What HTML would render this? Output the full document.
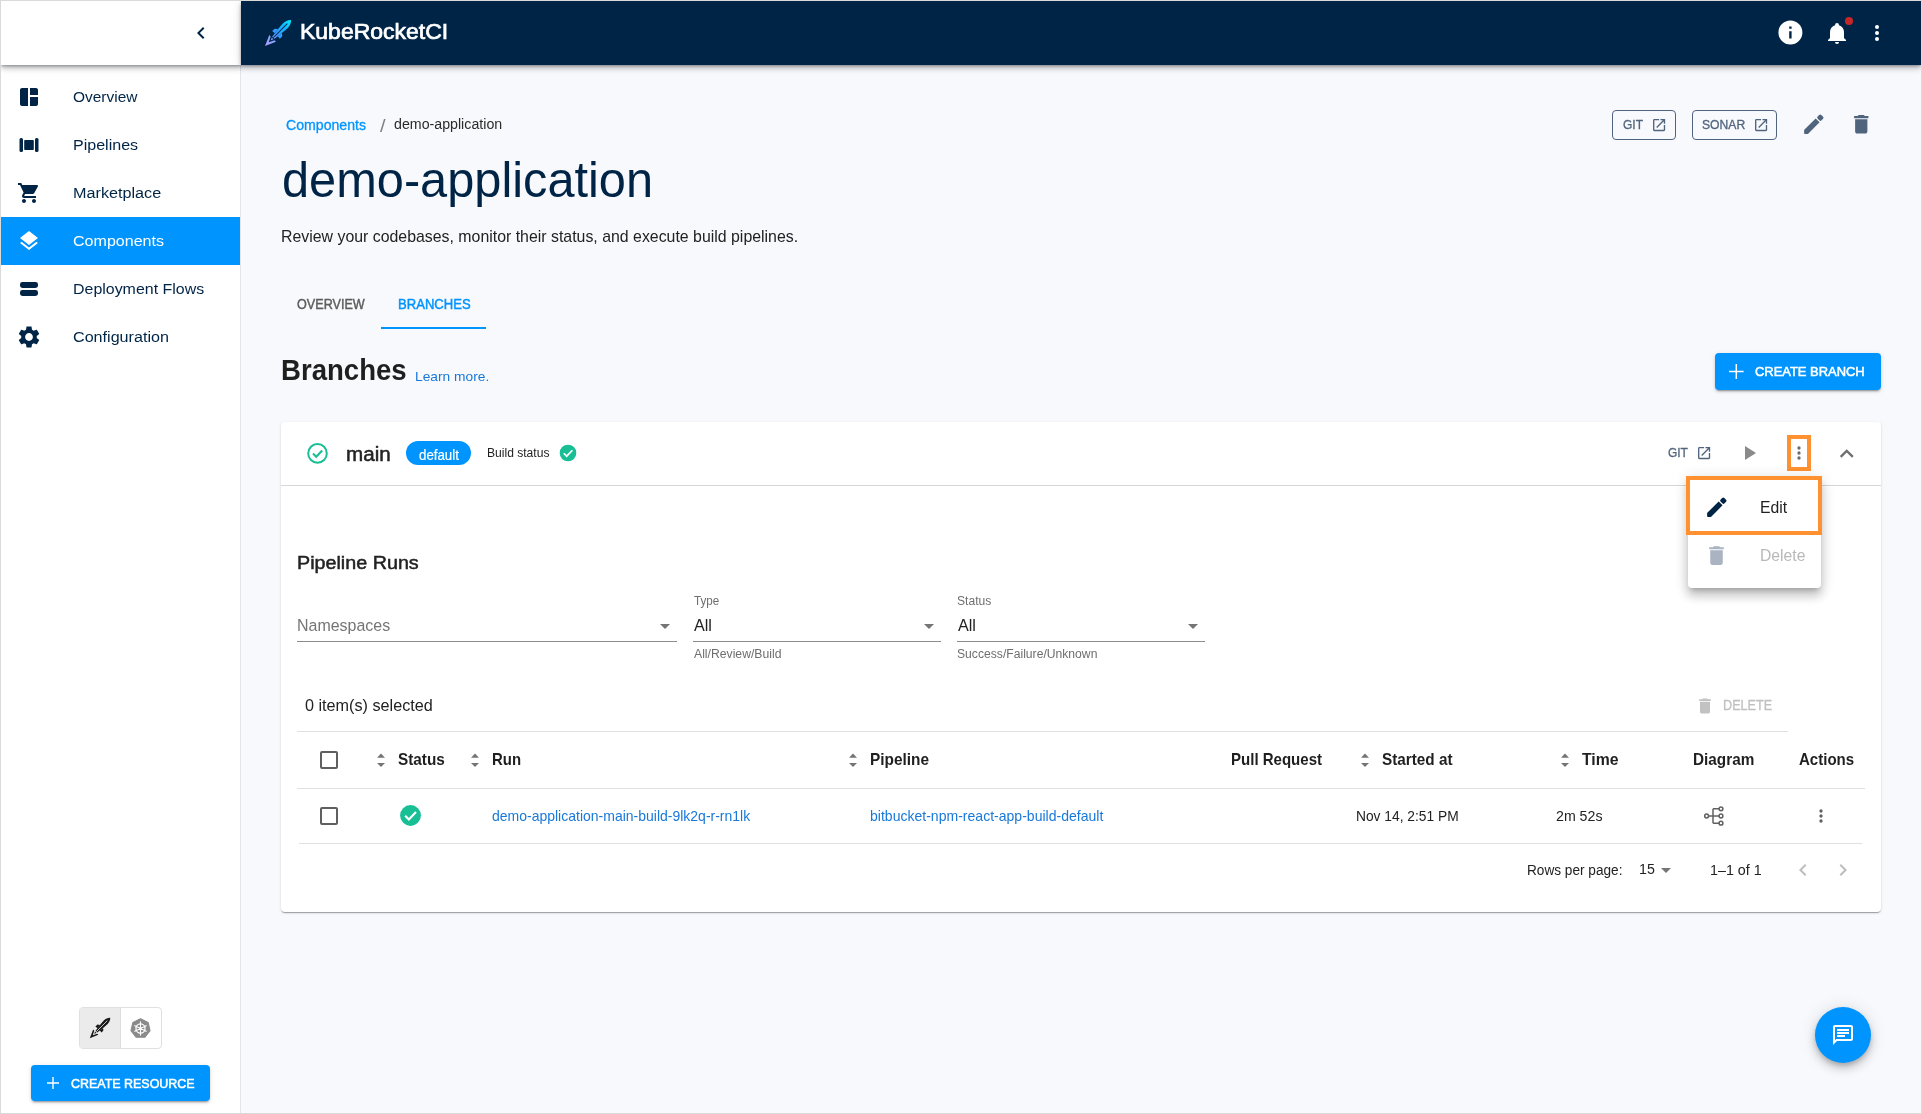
<!DOCTYPE html>
<html>
<head>
<meta charset="utf-8">
<title>KubeRocketCI</title>
<style>
*{box-sizing:border-box;margin:0;padding:0}
html,body{width:1922px;height:1114px;overflow:hidden;background:#dadada;font-family:"Liberation Sans",sans-serif;}
#app{position:absolute;left:1px;top:1px;width:1920px;height:1112px;background:#f8f9fd;overflow:hidden}
.a{position:absolute}
.t{position:absolute;white-space:nowrap;line-height:1;transform-origin:0 0;font-family:"Liberation Sans",sans-serif}
svg{position:absolute;overflow:visible}
/* sidebar */
#side{position:absolute;left:0;top:0;width:240px;height:1112px;background:#fff;border-right:1px solid #e3e5ea}
#sidetop{position:absolute;left:0;top:0;width:240px;height:64px;background:#fff;box-shadow:0 1px 2px 0 rgba(0,25,65,.2),0 2px 4px -1px rgba(0,0,0,.2),0 4px 5px 0 rgba(0,0,0,.14),0 1px 10px 0 rgba(0,0,0,.12)}
#navact{position:absolute;left:0;top:216px;width:239px;height:48px;background:#0094ff}
/* topbar */
#top{position:absolute;left:240px;top:0;width:1680px;height:64px;background:#002446;box-shadow:0 1px 2px 0 rgba(0,25,65,.2),0 2px 4px -1px rgba(0,0,0,.2),0 4px 5px 0 rgba(0,0,0,.14),0 1px 10px 0 rgba(0,0,0,.12)}
.btn-out{position:absolute;height:30px;border:1px solid #50647e;border-radius:4px}
.bluebtn{position:absolute;background:#0094ff;border-radius:4px;box-shadow:0 3px 1px -2px rgba(0,0,0,.2),0 2px 2px 0 rgba(0,0,0,.14),0 1px 5px 0 rgba(0,0,0,.12)}
#card{position:absolute;left:280px;top:421px;width:1600px;height:490px;background:#fff;border-radius:4px;box-shadow:0 2px 1px -1px rgba(0,0,0,.2),0 1px 1px 0 rgba(0,0,0,.14),0 1px 3px 0 rgba(0,0,0,.12)}
.hl{position:absolute;height:1px;background:#e0e0e0}
.ul{position:absolute;height:1px;background:#8c8c8c}
.cb{position:absolute;width:18px;height:18px;border:2px solid #5f5f5f;border-radius:2px}
.tri-d{position:absolute;width:0;height:0;border-left:5px solid transparent;border-right:5px solid transparent;border-top:5px solid #757575}
</style>
</head>
<body>
<div id="app">

<!-- ============ MAIN CONTENT ============ -->
<div id="main">
<!-- GIT / SONAR buttons -->
<div class="btn-out" style="left:1611px;top:109px;width:64px"></div>
<svg style="left:1649.800px;top:116.400px" width="16.200" height="16.200" viewBox="0 0 24 24" fill="#50647e"><path d="M19 19H5V5h7V3H5c-1.110 0-2 .9-2 2v14c0 1.100.89 2 2 2h14c1.100 0 2-.9 2-2v-7h-2v7zM14 3v2h3.590l-9.830 9.830 1.410 1.410L19 6.410V10h2V3h-7z"/></svg>
<div class="btn-out" style="left:1691px;top:109px;width:85px"></div>
<svg style="left:1751.800px;top:116.400px" width="16.200" height="16.200" viewBox="0 0 24 24" fill="#50647e"><path d="M19 19H5V5h7V3H5c-1.110 0-2 .9-2 2v14c0 1.100.89 2 2 2h14c1.100 0 2-.9 2-2v-7h-2v7zM14 3v2h3.590l-9.830 9.830 1.410 1.410L19 6.410V10h2V3h-7z"/></svg>
<!-- pencil -->
<svg style="left:1799.900px;top:110.800px" width="25" height="25" viewBox="0 0 24 24" fill="#50647e"><path d="M3 17.460v3.040c0 .28.22.5.5.5h3.040c.13 0 .26-.05.35-.15L17.810 9.940l-3.750-3.750L3.150 17.100c-.1.1-.15.22-.15.36z"/><rect x="9.350" y="0.200" width="5.300" height="5" rx="1.500" transform="rotate(45 12 12)"/></svg>
<!-- trash -->
<svg style="left:1847.500px;top:111.300px" width="24.500" height="24.500" viewBox="0 0 24 24" fill="#50647e"><path d="M6 19c0 1.100.9 2 2 2h8c1.100 0 2-.9 2-2V7H6v12zM19 4h-3.500l-1-1h-5l-1 1H5v2h14V4z"/></svg>
<!-- tab underline -->
<div class="a" style="left:380px;top:326px;width:105px;height:2px;background:#0094ff"></div>
<!-- create branch -->
<div class="bluebtn" style="left:1714px;top:352px;width:166px;height:37px"></div>
<svg style="left:1728.300px;top:362.500px" width="14.600" height="15" viewBox="0 0 14.600 15"><path d="M7.300 0V15M0 7.500H14.600" stroke="#fff" stroke-width="1.500" fill="none"/></svg>
<!-- card -->
<div id="card"></div>
<div class="hl" style="left:280px;top:484px;width:1600px;background:#d6d6d6"></div>
<!-- outline check -->
<svg style="left:306px;top:442px" width="21" height="21" viewBox="0 0 21 21" fill="none" stroke="#18be94"><circle cx="10.500" cy="10.400" r="9.300" stroke-width="2"/><path d="M6 10.600L9.200 13.800L15.200 7.600" stroke-width="2.100"/></svg>
<!-- chip -->
<div class="a" style="left:405px;top:440px;width:65px;height:24px;border-radius:12px;background:#0094ff"></div>
<!-- filled check small -->
<svg style="left:557px;top:442.100px" width="20" height="20" viewBox="0 0 24 24" fill="#18be94"><circle cx="12" cy="12" r="10"/><path d="M6.900 12.300L10.400 15.800L17.300 8.700" fill="none" stroke="#fff" stroke-width="2.100"/></svg>
<!-- card header right -->
<svg style="left:1694.700px;top:444px" width="16.200" height="16.200" viewBox="0 0 24 24" fill="#50647e"><path d="M19 19H5V5h7V3H5c-1.110 0-2 .9-2 2v14c0 1.100.89 2 2 2h14c1.100 0 2-.9 2-2v-7h-2v7zM14 3v2h3.590l-9.830 9.830 1.410 1.410L19 6.410V10h2V3h-7z"/></svg>
<svg style="left:1735.900px;top:440.200px" width="24" height="24" viewBox="0 0 24 24" fill="#8a8a8a"><path d="M8 5v14l11-7z"/></svg>
<svg style="left:1788px;top:442.200px" width="20" height="20" viewBox="0 0 24 24" fill="#6c6c6c"><circle cx="12" cy="6" r="2"/><circle cx="12" cy="12" r="2"/><circle cx="12" cy="18" r="2"/></svg>
<svg style="left:1832.200px;top:438.800px" width="27.500" height="27.500" viewBox="0 0 24 24" fill="#6e6e6e"><path d="M12 8l-6 6 1.410 1.410L12 10.830l4.590 4.580L18 14z"/></svg>
<!-- filters -->
<div class="ul" style="left:296px;top:640px;width:380px"></div>
<div class="tri-d" style="left:658.600px;top:622.700px"></div>
<div class="ul" style="left:692px;top:640px;width:248px"></div>
<div class="tri-d" style="left:923px;top:622.700px"></div>
<div class="ul" style="left:956px;top:640px;width:248px"></div>
<div class="tri-d" style="left:1187.300px;top:622.700px"></div>
<!-- selected row / delete -->
<svg style="left:1694px;top:695px" width="20" height="20" viewBox="0 0 24 24" fill="#c2c2c2"><path d="M6 19c0 1.100.9 2 2 2h8c1.100 0 2-.9 2-2V7H6v12zM19 4h-3.500l-1-1h-5l-1 1H5v2h14V4z"/></svg>
<div class="hl" style="left:296px;top:730px;width:1491px"></div>
<!-- table header -->
<div class="cb" style="left:319px;top:750px"></div>
<svg style="left:375.8px;top:752px" width="8" height="14" viewBox="0 0 8 14" fill="#757575"><path d="M0 4.800L4 0.500L8 4.800Z M0 10L4 14L8 10Z"/></svg>
<svg style="left:469.8px;top:752px" width="8" height="14" viewBox="0 0 8 14" fill="#757575"><path d="M0 4.800L4 0.500L8 4.800Z M0 10L4 14L8 10Z"/></svg>
<svg style="left:847.8px;top:752px" width="8" height="14" viewBox="0 0 8 14" fill="#757575"><path d="M0 4.800L4 0.500L8 4.800Z M0 10L4 14L8 10Z"/></svg>
<svg style="left:1359.7px;top:752px" width="8" height="14" viewBox="0 0 8 14" fill="#757575"><path d="M0 4.800L4 0.500L8 4.800Z M0 10L4 14L8 10Z"/></svg>
<svg style="left:1559.8px;top:752px" width="8" height="14" viewBox="0 0 8 14" fill="#757575"><path d="M0 4.800L4 0.500L8 4.800Z M0 10L4 14L8 10Z"/></svg>

<div class="hl" style="left:296px;top:787px;width:1568px"></div>
<!-- row -->
<div class="cb" style="left:319px;top:806px"></div>
<svg style="left:397px;top:802.100px" width="25" height="25" viewBox="0 0 24 24" fill="#18be94"><circle cx="12" cy="12" r="10"/><path d="M6.900 12.300L10.400 15.800L17.300 8.700" fill="none" stroke="#fff" stroke-width="2.100"/></svg>
<!-- diagram icon -->
<svg style="left:1703.200px;top:805px" width="20" height="20" viewBox="0 0 20 20" fill="none" stroke="#616161" stroke-width="1.500"><circle cx="2.600" cy="10" r="1.900"/><circle cx="17" cy="2.800" r="1.900"/><circle cx="17" cy="10" r="1.900"/><circle cx="17" cy="17.200" r="1.900"/><path d="M4.500 10H15.100M9 2.800H15.100M9 17.200H15.100M9 2.800V17.200"/></svg>
<svg style="left:1809.800px;top:805px" width="20" height="20" viewBox="0 0 24 24" fill="#616161"><circle cx="12" cy="6" r="2"/><circle cx="12" cy="12" r="2"/><circle cx="12" cy="18" r="2"/></svg>
<div class="hl" style="left:298px;top:842px;width:1563px"></div>
<!-- pagination -->
<div class="tri-d" style="left:1660.100px;top:866.600px"></div>
<svg style="left:1789.600px;top:857px" width="24" height="24" viewBox="0 0 24 24" fill="#bdbdbd"><path d="M15.410 7.410L14 6l-6 6 6 6 1.410-1.410L10.830 12z"/></svg>
<svg style="left:1830.300px;top:857px" width="24" height="24" viewBox="0 0 24 24" fill="#bdbdbd"><path d="M10 6L8.590 7.410 13.170 12l-4.580 4.590L10 18l6-6z"/></svg>
<!-- FAB -->
<div class="a" style="left:1814px;top:1006px;width:56px;height:56px;border-radius:50%;background:#0094ff;box-shadow:0 3px 5px -1px rgba(0,0,0,.2),0 6px 10px 0 rgba(0,0,0,.14),0 1px 18px 0 rgba(0,0,0,.12)"></div>
<svg style="left:1830px;top:1022px" width="24" height="24" viewBox="0 0 24 24" fill="#fff"><path d="M4 4h16v12H5.170L4 17.170V4m0-2c-1.100 0-1.990.9-1.990 2L2 22l4-4h14c1.100 0 2-.9 2-2V4c0-1.100-.9-2-2-2H4zm2 10h8v2H6v-2zm0-3h12v2H6V9zm0-3h12v2H6V6z"/></svg>

</div>

<!-- ============ SIDEBAR ============ -->
<div id="side">
<div id="navact"></div>
<!-- overview -->
<svg style="left:16px;top:84px" width="24" height="24" viewBox="0 0 24 24" fill="#002446"><path d="M11 21H5c-1.1 0-2-.9-2-2V5c0-1.1.9-2 2-2h6v18zm2 0h6c1.1 0 2-.9 2-2v-7h-8v9zm8-11V5c0-1.1-.9-2-2-2h-6v7h8z"/></svg>
<!-- pipelines -->
<svg style="left:16px;top:132px" width="24" height="24" viewBox="0 0 24 24" fill="#002446"><rect x="2.5" y="5" width="3.5" height="14" rx="1.5"/><rect x="7.2" y="7" width="9.6" height="10" rx="0.8"/><rect x="18" y="5" width="3.5" height="14" rx="1.5"/></svg>
<!-- marketplace -->
<svg style="left:16px;top:180px" width="24" height="24" viewBox="0 0 24 24" fill="#002446"><path d="M7 18c-1.1 0-1.99.9-1.99 2S5.900 22 7 22s2-.9 2-2-.9-2-2-2zM1 2v2h2l3.600 7.590-1.350 2.450c-.16.28-.25.61-.25.96 0 1.100.9 2 2 2h12v-2H7.420c-.14 0-.25-.11-.25-.25l.03-.12.9-1.630h7.450c.75 0 1.410-.41 1.750-1.030l3.580-6.490c.08-.14.12-.31.12-.48 0-.55-.45-1-1-1H5.210l-.94-2H1zm16 16c-1.100 0-1.990.9-1.990 2s.89 2 1.990 2 2-.9 2-2-.9-2-2-2z"/></svg>
<!-- components -->
<svg style="left:16px;top:228px" width="24" height="24" viewBox="0 0 24 24" fill="#fff"><path d="M11.99 18.54l-7.370-5.730L3 14.070l9 7 9-7-1.630-1.270-7.380 5.740zM12 16l7.360-5.730L21 9l-9-7-9 7 1.630 1.270L12 16z"/></svg>
<!-- deployment flows -->
<svg style="left:16px;top:276px" width="24" height="24" viewBox="0 0 24 24" fill="#002446"><rect x="3" y="5" width="18" height="6" rx="2.4"/><rect x="3" y="13" width="18" height="6" rx="2.4"/></svg>
<!-- configuration -->
<svg style="left:15px;top:323px" width="26" height="26" viewBox="0 0 24 24" fill="#002446"><path d="M19.140 12.940c.04-.3.06-.61.06-.94 0-.32-.02-.64-.07-.94l2.030-1.580c.18-.14.23-.41.12-.61l-1.920-3.320c-.12-.22-.37-.29-.59-.22l-2.390.96c-.5-.38-1.030-.7-1.620-.94l-.36-2.540c-.04-.24-.24-.41-.48-.41h-3.840c-.24 0-.43.17-.47.41l-.36 2.540c-.59.24-1.130.57-1.620.94l-2.390-.96c-.22-.08-.47 0-.59.22L2.740 8.870c-.12.21-.08.47.12.61l2.030 1.580c-.05.3-.09.63-.09.94s.02.64.07.94l-2.030 1.580c-.18.14-.23.41-.12.61l1.920 3.320c.12.22.37.29.59.22l2.390-.96c.5.38 1.030.7 1.620.94l.36 2.540c.05.24.24.41.48.41h3.840c.24 0 .44-.17.47-.41l.36-2.540c.59-.24 1.130-.56 1.620-.94l2.390.96c.22.08.47 0 .59-.22l1.920-3.320c.12-.22.07-.47-.12-.61l-2.010-1.580zM12 15.600c-1.980 0-3.600-1.620-3.600-3.600s1.620-3.600 3.600-3.600 3.600 1.620 3.600 3.600-1.620 3.600-3.600 3.600z"/></svg>
<!-- toggle group -->
<div class="a" style="left:78px;top:1006px;width:83px;height:42px;border:1px solid #e0e0e0;border-radius:4px;background:#fff;overflow:hidden"><div class="a" style="left:0;top:0;width:41px;height:40px;background:#ebebeb;border-right:1px solid #dcdcdc"></div></div>
<!-- mini rocket dark -->
<svg style="left:88px;top:1016px" width="22" height="22" viewBox="0 0 28 28"><g transform="translate(14,14) rotate(45)" fill="#1a1a1a"><path d="M0 -18.400C2.200 -16.500 3.300 -13.500 3.300 -10.500C3.300 -6 2.200 1 1.500 6.700L-1.500 6.700C-2.200 1 -3.300 -6 -3.300 -10.500C-3.300 -13.500 -2.200 -16.500 0 -18.400Z"/><path d="M0 -13.200L0 6.700" stroke="#ebebeb" stroke-width="1" fill="none"/><path d="M-2.700 -2.800L-5.300 -0.800L-5.500 2.800L-2.100 2.400ZM2.700 -2.800L5.300 -0.800L5.500 2.800L2.100 2.400Z"/><path d="M-4.700 7.600L0 18.400L4.700 7.600L2.700 7.600L0 13L-2.700 7.600Z"/><path d="M-1.200 7.600L0 10.200L1.200 7.600Z"/></g></svg>
<!-- k8s -->
<svg style="left:129px;top:1017px" width="21" height="21" viewBox="0 0 24 24"><path d="M12 0.800 L20.700 5 L22.900 14.500 L16.900 22.100 L7.100 22.100 L1.100 14.500 L3.300 5 Z" fill="#8a8a8a" stroke="#8a8a8a" stroke-width="1.2" stroke-linejoin="round"/><circle cx="12" cy="12" r="5.2" fill="none" stroke="#fff" stroke-width="1.5"/><g stroke="#fff" stroke-width="1.300" stroke-linecap="round"><path d="M12 4.500V19.500M5.500 8.800L18.500 15.200M5.500 15.200L18.500 8.800"/></g><circle cx="12" cy="12" r="1.500" fill="#fff"/></svg>
<!-- create resource -->
<div class="bluebtn" style="left:30px;top:1064px;width:179px;height:36px"></div>
<svg style="left:46px;top:1076px" width="12" height="12" viewBox="0 0 12 12"><path d="M6 0V12M0 6H12" stroke="#fff" stroke-width="1.400" fill="none"/></svg>

</div>

<!-- ============ TOP BAR ============ -->
<div id="sidetop"></div>
<div id="top"></div>
<!-- chevron left -->
<svg style="left:188px;top:20px" width="24" height="24" viewBox="0 0 24 24" fill="#002446"><path d="M15.410 7.410L14 6l-6 6 6 6 1.410-1.410L10.830 12z"/></svg>
<!-- rocket logo -->
<svg style="left:263px;top:18px" width="28" height="28" viewBox="0 0 28 28">
<defs><linearGradient id="rg" x1="0" y1="-18.400" x2="0" y2="18.400" gradientUnits="userSpaceOnUse"><stop offset="0" stop-color="#00f0ff"/><stop offset="0.280" stop-color="#12b4ff"/><stop offset="0.560" stop-color="#3a96ff"/><stop offset="0.720" stop-color="#86a2ff"/><stop offset="1" stop-color="#b39cff"/></linearGradient></defs>
<g transform="translate(14,14) rotate(45)" fill="url(#rg)">
<path d="M0 -18.400C2.200 -16.500 3.300 -13.500 3.300 -10.500C3.300 -6 2.200 1 1.500 6.700L-1.500 6.700C-2.200 1 -3.300 -6 -3.300 -10.500C-3.300 -13.500 -2.200 -16.500 0 -18.400Z"/>
<path d="M0 -13.200L0 6.700" stroke="#002446" stroke-width="1" fill="none"/>
<path d="M-2.700 -2.800L-5.300 -0.800L-5.500 2.800L-2.100 2.400ZM2.700 -2.800L5.300 -0.800L5.500 2.800L2.100 2.400Z"/>
<path d="M-4.700 7.600L0 18.400L4.700 7.600L2.700 7.600L0 13L-2.700 7.600Z"/>
<path d="M-1.200 7.600L0 10.200L1.200 7.600Z"/>
</g></svg>
<!-- info -->
<svg style="left:1775.300px;top:17.100px" width="28.800" height="28.800" viewBox="0 0 24 24" fill="#fff"><path d="M13 9h-2V7h2m0 10h-2v-6h2m-1-9A10 10 0 0 0 2 12a10 10 0 0 0 10 10a10 10 0 0 0 10-10A10 10 0 0 0 12 2z"/></svg>
<!-- bell -->
<svg style="left:1824px;top:20px" width="24" height="24" viewBox="0 0 24 24" fill="#fff"><path d="M21 19v1H3v-1l2-2v-6c0-3.100 2.030-5.830 5-6.710V4a2 2 0 0 1 2-2a2 2 0 0 1 2 2v.29c2.970.88 5 3.610 5 6.710v6l2 2m-7 2a2 2 0 0 1-2 2a2 2 0 0 1-2-2"/></svg>
<div class="a" style="left:1844px;top:16px;width:8px;height:8px;border-radius:50%;background:#c62828"></div>
<!-- kebab -->
<svg style="left:1864px;top:20px" width="24" height="24" viewBox="0 0 24 24" fill="#fff"><circle cx="12" cy="6" r="2"/><circle cx="12" cy="12" r="2"/><circle cx="12" cy="18" r="2"/></svg>


<!-- orange highlight on kebab -->
<div class="a" style="left:1786px;top:434px;width:24px;height:36px;border:4px solid #ff9130"></div>
<!-- menu paper -->
<div class="a" style="left:1687px;top:475px;width:133px;height:112px;background:#fff;border-radius:4px;box-shadow:0 5px 5px -3px rgba(0,0,0,.2),0 8px 10px 1px rgba(0,0,0,.14),0 3px 14px 2px rgba(0,0,0,.12)"></div>
<div class="a" style="left:1685px;top:475px;width:136px;height:59px;border:4px solid #ff9130"></div>
<svg style="left:1703.400px;top:493.500px" width="25" height="25" viewBox="0 0 24 24" fill="#002446"><path d="M3 17.460v3.040c0 .28.22.5.5.5h3.040c.13 0 .26-.05.35-.15L17.810 9.940l-3.750-3.750L3.150 17.100c-.1.1-.15.22-.15.36z"/><rect x="9.350" y="0.200" width="5.300" height="5" rx="1.500" transform="rotate(45 12 12)"/></svg>
<svg style="left:1703px;top:542px" width="25" height="25" viewBox="0 0 24 24" fill="#a9b3c1"><path d="M6 19c0 1.100.9 2 2 2h8c1.100 0 2-.9 2-2V7H6v12zM19 4h-3.500l-1-1h-5l-1 1H5v2h14V4z"/></svg>

<div id="txt" style="position:absolute;left:0;top:0;width:1920px;height:1112px;will-change:transform">
<div class="t" style="left:72.24px;top:88.10px;font-size:15.36px;color:#002446;transform:scaleX(1.0071);">Overview</div>
<div class="t" style="left:71.69px;top:136.10px;font-size:15.36px;color:#002446;transform:scaleX(1.0446);">Pipelines</div>
<div class="t" style="left:71.68px;top:184.10px;font-size:15.36px;color:#002446;transform:scaleX(1.0544);">Marketplace</div>
<div class="t" style="left:72.22px;top:232.10px;font-size:15.36px;color:#fff;transform:scaleX(1.0449);">Components</div>
<div class="t" style="left:71.70px;top:280.10px;font-size:15.36px;color:#002446;transform:scaleX(1.0378);">Deployment Flows</div>
<div class="t" style="left:72.21px;top:328.10px;font-size:15.36px;color:#002446;transform:scaleX(1.0496);">Configuration</div>
<div class="t" style="left:69.77px;top:1075.92px;font-size:13.44px;color:#fff;transform:scaleX(0.9271);-webkit-text-stroke:0.55px #fff;">CREATE RESOURCE</div>
<div class="t" style="left:298.76px;top:20.78px;font-size:21.4px;color:#fff;transform:scaleX(1.0743);-webkit-text-stroke:0.7px #fff;">KubeRocketCI</div>
<div class="t" style="left:284.70px;top:117.43px;font-size:14.14px;color:#0094ff;transform:scaleX(0.9994);-webkit-text-stroke:0.3px #0094ff;">Components</div>
<div class="t" style="left:379.20px;top:115.94px;font-size:18.5px;color:#808080;transform:scaleX(1.08);">/</div>
<div class="t" style="left:392.79px;top:116.45px;font-size:14px;color:#2b2b2b;transform:scaleX(1.0147);">demo-application</div>
<div class="t" style="left:280.67px;top:153.64px;font-size:50.4px;color:#002446;transform:scaleX(0.9669);">demo-application</div>
<div class="t" style="left:279.87px;top:227.02px;font-size:16.16px;color:#222;transform:scaleX(0.9826);">Review your codebases, monitor their status, and execute build pipelines.</div>
<div class="t" style="left:295.86px;top:295.71px;font-size:14.28px;color:#5c5c5c;transform:scaleX(0.8839);-webkit-text-stroke:0.45px #5c5c5c;">OVERVIEW</div>
<div class="t" style="left:396.51px;top:295.71px;font-size:14.28px;color:#0094ff;transform:scaleX(0.9163);-webkit-text-stroke:0.45px #0094ff;">BRANCHES</div>
<div class="t" style="left:280.15px;top:354.94px;font-size:29.25px;font-weight:bold;color:#1f1f1f;transform:scaleX(0.9425);">Branches</div>
<div class="t" style="left:413.98px;top:368.52px;font-size:13.44px;color:#1878d9;transform:scaleX(1.0249);">Learn more.</div>
<div class="t" style="left:1753.96px;top:363.54px;font-size:13.3px;color:#fff;transform:scaleX(0.9727);-webkit-text-stroke:0.55px #fff;">CREATE BRANCH</div>
<div class="t" style="left:1621.72px;top:118.34px;font-size:12.48px;color:#50647e;transform:scaleX(0.963);-webkit-text-stroke:0.3px #50647e;">GIT</div>
<div class="t" style="left:1700.61px;top:118.34px;font-size:12.48px;color:#50647e;transform:scaleX(0.9747);-webkit-text-stroke:0.3px #50647e;">SONAR</div>
<div class="t" style="left:344.95px;top:444.01px;font-size:19.6px;color:#222;transform:scaleX(1.0519);-webkit-text-stroke:0.5px #222;">main</div>
<div class="t" style="left:418.03px;top:446.55px;font-size:14.0px;color:#fff;transform:scaleX(0.9494);-webkit-text-stroke:0.2px #fff;">default</div>
<div class="t" style="left:485.85px;top:446.24px;font-size:12px;color:#222;transform:scaleX(1.0066);">Build status</div>
<div class="t" style="left:1667.02px;top:445.64px;font-size:12.48px;color:#50647e;transform:scaleX(0.958);-webkit-text-stroke:0.3px #50647e;">GIT</div>
<div class="t" style="left:1759.04px;top:499.03px;font-size:15.68px;color:#222;transform:scaleX(1.0058);">Edit</div>
<div class="t" style="left:1759.05px;top:546.93px;font-size:15.68px;color:#b8b8b8;transform:scaleX(1.0023);">Delete</div>
<div class="t" style="left:295.81px;top:552.48px;font-size:19.1px;color:#222;transform:scaleX(1.0331);-webkit-text-stroke:0.5px #222;">Pipeline Runs</div>
<div class="t" style="left:295.88px;top:616.39px;font-size:16.32px;color:#757575;transform:scaleX(0.9786);">Namespaces</div>
<div class="t" style="left:692.96px;top:594.04px;font-size:12px;color:#6e6e6e;transform:scaleX(0.9703);">Type</div>
<div class="t" style="left:693.20px;top:616.25px;font-size:16.48px;color:#222;transform:scaleX(0.9797);">All</div>
<div class="t" style="left:693.20px;top:647.04px;font-size:12px;color:#6e6e6e;transform:scaleX(1.0164);">All/Review/Build</div>
<div class="t" style="left:956.40px;top:594.04px;font-size:12px;color:#6e6e6e;transform:scaleX(1.0075);">Status</div>
<div class="t" style="left:956.90px;top:616.25px;font-size:16.48px;color:#222;transform:scaleX(0.9797);">All</div>
<div class="t" style="left:956.39px;top:647.04px;font-size:12px;color:#6e6e6e;transform:scaleX(1.012);">Success/Failure/Unknown</div>
<div class="t" style="left:304.11px;top:696.15px;font-size:16.48px;color:#222;transform:scaleX(0.9837);">0 item(s) selected</div>
<div class="t" style="left:1722.12px;top:697.19px;font-size:14.42px;color:#c0c0c0;transform:scaleX(0.8785);-webkit-text-stroke:0.3px #c0c0c0;">DELETE</div>
<div class="t" style="left:396.71px;top:750.93px;font-size:15.68px;font-weight:bold;color:#1f1f1f;transform:scaleX(0.9775);">Status</div>
<div class="t" style="left:490.65px;top:750.93px;font-size:15.68px;font-weight:bold;color:#1f1f1f;transform:scaleX(0.9544);">Run</div>
<div class="t" style="left:868.72px;top:750.93px;font-size:15.68px;font-weight:bold;color:#1f1f1f;transform:scaleX(0.9812);">Pipeline</div>
<div class="t" style="left:1229.84px;top:750.93px;font-size:15.68px;font-weight:bold;color:#1f1f1f;transform:scaleX(0.9589);">Pull Request</div>
<div class="t" style="left:1381.11px;top:750.93px;font-size:15.68px;font-weight:bold;color:#1f1f1f;transform:scaleX(0.9756);">Started at</div>
<div class="t" style="left:1580.90px;top:750.93px;font-size:15.68px;font-weight:bold;color:#1f1f1f;transform:scaleX(1.007);">Time</div>
<div class="t" style="left:1692.02px;top:750.93px;font-size:15.68px;font-weight:bold;color:#1f1f1f;transform:scaleX(0.977);">Diagram</div>
<div class="t" style="left:1797.52px;top:750.93px;font-size:15.68px;font-weight:bold;color:#1f1f1f;transform:scaleX(0.9593);">Actions</div>
<div class="t" style="left:491.30px;top:808.57px;font-size:13.86px;color:#1878d9;transform:scaleX(1.0096);">demo-application-main-build-9lk2q-r-rn1lk</div>
<div class="t" style="left:869.14px;top:808.57px;font-size:13.86px;color:#1878d9;transform:scaleX(1.0131);">bitbucket-npm-react-app-build-default</div>
<div class="t" style="left:1354.63px;top:808.31px;font-size:14.28px;color:#222;transform:scaleX(0.9659);">Nov 14, 2:51 PM</div>
<div class="t" style="left:1554.95px;top:808.31px;font-size:14.28px;color:#222;transform:scaleX(0.9934);">2m 52s</div>
<div class="t" style="left:1526.14px;top:861.81px;font-size:14.28px;color:#222;transform:scaleX(0.9555);">Rows per page:</div>
<div class="t" style="left:1637.50px;top:860.81px;font-size:14.28px;color:#222;transform:scaleX(0.9965);">15</div>
<div class="t" style="left:1709.40px;top:861.91px;font-size:14.28px;color:#222;transform:scaleX(1.002);">1–1 of 1</div>
</div>
</div>
</body>
</html>
